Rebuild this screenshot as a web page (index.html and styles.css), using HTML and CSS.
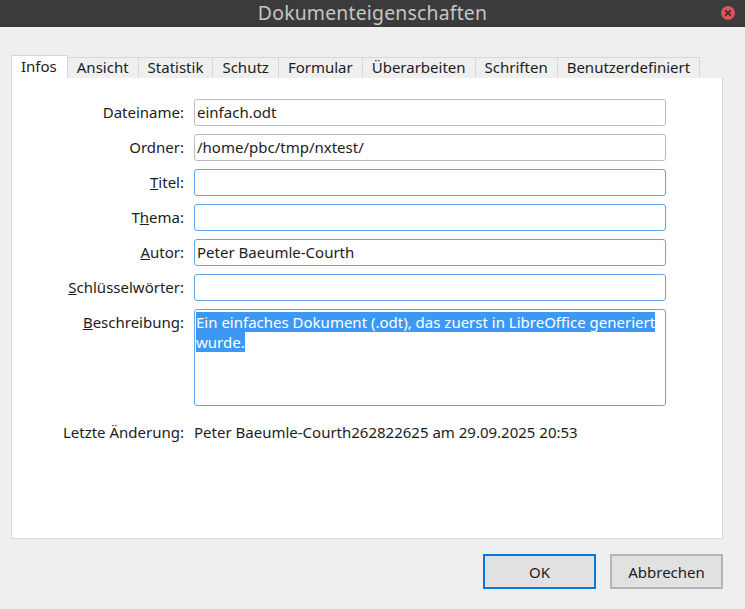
FILE: index.html
```html
<!DOCTYPE html>
<html lang="de">
<head>
<meta charset="utf-8">
<title>Dokumenteigenschaften</title>
<link rel="stylesheet" href="styles.css">
</head>
<body>
<div class="window">
  <div class="titlebar">
    <span class="title">Dokumenteigenschaften</span>
    <span class="close">
      <svg width="14" height="14" viewBox="0 0 14 14"><circle cx="7" cy="7" r="7" fill="#d9555a"/><path d="M4.6 4.6 L9.4 9.4 M9.4 4.6 L4.6 9.4" stroke="#3a3030" stroke-width="1.6" stroke-linecap="round"/></svg>
    </span>
  </div>
  <div class="content">
    <div class="tabs">
      <div class="tab active">Infos</div>
      <div class="tab">Ansicht</div>
      <div class="tab">Statistik</div>
      <div class="tab">Schutz</div>
      <div class="tab">Formular</div>
      <div class="tab">Überarbeiten</div>
      <div class="tab">Schriften</div>
      <div class="tab">Benutzerdefiniert</div>
    </div>
    <div class="panel">
      <div class="form">
        <label class="lbl">Dateiname:</label>
        <div class="field ro">einfach.odt</div>
        <label class="lbl">Ordner:</label>
        <div class="field ro">/home/pbc/tmp/nxtest/</div>
        <label class="lbl"><u>T</u>itel:</label>
        <div class="field"></div>
        <label class="lbl">T<u>h</u>ema:</label>
        <div class="field"></div>
        <label class="lbl"><u>A</u>utor:</label>
        <div class="field">Peter Baeumle-Courth</div>
        <label class="lbl"><u>S</u>chlüsselwörter:</label>
        <div class="field"></div>
        <label class="lbl top"><u>B</u>eschreibung:</label>
        <div class="field area"><span class="sel">Ein einfaches Dokument (.odt), das zuerst in LibreOffice generiert wurde.</span></div>
        <label class="lbl info">Letzte Änderung:</label>
        <div class="value info">Peter Baeumle-Courth262822625 am 29.09.2025 20:53</div>
      </div>
    </div>
    <div class="buttons">
      <button class="btn default">OK</button>
      <button class="btn">Abbrechen</button>
    </div>
  </div>
</div>
</body>
</html>
```
FILE: styles.css
```css
html, body {
  margin: 0;
  padding: 0;
}
body {
  width: 745px;
  height: 609px;
  overflow: hidden;
  background: #efefef;
  font-family: "Noto Sans", "Open Sans", sans-serif;
  font-size: 15px;
  color: #1c1c1c;
}
.window {
  display: flex;
  flex-direction: column;
  height: 609px;
}
.titlebar {
  position: relative;
  height: 27px;
  background: #3b3b3b;
  display: flex;
  align-items: flex-start;
  justify-content: center;
}
.title {
  font-size: 19.4px;
  color: #c6c6c6;
  letter-spacing: 0.2px;
  line-height: 26.5px;
}
.close {
  position: absolute;
  left: 721px;
  top: 6px;
  width: 14px;
  height: 14px;
  display: flex;
}
.content {
  padding: 28px 22px 0 11px;
}
.tabs {
  display: flex;
  align-items: flex-end;
  height: 23px;
}
.tab {
  height: 21px;
  line-height: 19px;
  padding: 0 9px;
  border: 1px solid #d6d6d6;
  border-bottom: none;
  border-left: none;
  background: #efefef;
  color: #1c1c1c;
  box-sizing: border-box;
}
.tab.active {
  height: 23px;
  line-height: 21px;
  background: #fff;
  border-left: 1px solid #d6d6d6;
  padding: 0 10px 0 9px;
}
.panel {
  height: 461px;
  box-sizing: border-box;
  background: #fff;
  border: 1px solid #d6d6d6;
  border-top: none;
  padding: 21px 0 0 0;
}
.form {
  display: grid;
  grid-template-columns: 172px 472px;
  column-gap: 10px;
  row-gap: 8px;
}
.lbl {
  text-align: right;
  line-height: 27px;
  white-space: nowrap;
}
.lbl.top {
  line-height: 26px;
}
.field {
  height: 27px;
  box-sizing: border-box;
  border: 1px solid #5fa6ee;
  border-radius: 3px;
  background: #fff;
  padding: 0 2px;
  line-height: 25px;
  white-space: nowrap;
}
.field.ro {
  border-color: #bcbcbc;
}
.field.area {
  height: 97px;
  white-space: normal;
  line-height: 20px;
  padding: 2px 0 2px 1px;
}
.sel {
  background: #3d98f3;
  color: #fff;
  -webkit-box-decoration-break: clone;
}
.info {
  margin-top: 8px;
  line-height: 20px;
}
.value {
  white-space: nowrap;
}
.buttons {
  display: flex;
  justify-content: flex-end;
  gap: 14px;
  padding-top: 15px;
}
.btn {
  width: 113px;
  height: 35px;
  box-sizing: border-box;
  background: #e1e1e1;
  border: 2px solid #b4b4b4;
  border-radius: 0;
  font-family: "Noto Sans", "Open Sans", sans-serif;
  font-size: 15px;
  color: #1c1c1c;
  padding: 0;
}
.btn.default {
  border-color: #0a78d4;
}
```
